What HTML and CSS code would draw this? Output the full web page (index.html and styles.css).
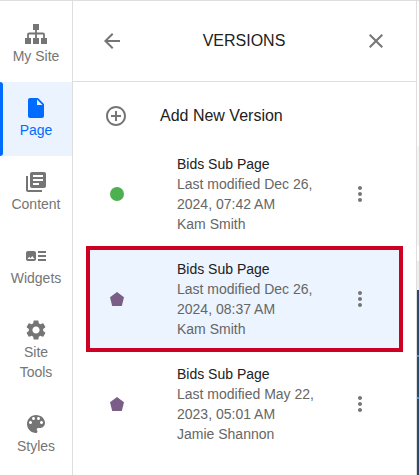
FILE: index.html
```html
<!DOCTYPE html>
<html lang="en">
<head>
<meta charset="utf-8">
<title>Versions</title>
<link rel="stylesheet" href="styles.css">
</head>
<body>
<div class="app">
  <nav class="sidebar" aria-label="Main">
    <a class="nav-item" href="#">
      <svg class="icon" viewBox="0 0 24 24"><rect x="9" y="2" width="6" height="6"/><rect x="1" y="16" width="6" height="6"/><rect x="9" y="16" width="6" height="6"/><rect x="17" y="16" width="6" height="6"/><path d="M12 8v8M4 16v-3.500q0-1 1-1h14q1 0 1 1V16" fill="none" stroke="#757575" stroke-width="1.800"/></svg>
      <span>My Site</span>
    </a>
    <a class="nav-item active" href="#" aria-current="page">
      <svg class="icon" viewBox="0 0 24 24"><path d="M6 2c-1.100 0-2 .9-2 2v16c0 1.100.9 2 2 2h12c1.100 0 2-.9 2-2V8l-6-6H6zm7 7V3.500L18.500 9H13z"/></svg>
      <span>Page</span>
    </a>
    <a class="nav-item" href="#">
      <svg class="icon" viewBox="0 0 24 24"><path d="M4 6H2v14c0 1.100.9 2 2 2h14v-2H4V6zm16-4H8c-1.100 0-2 .9-2 2v12c0 1.100.9 2 2 2h12c1.100 0 2-.9 2-2V4c0-1.100-.9-2-2-2zm-1 9H9V9h10v2zm-4 4H9v-2h6v2zm4-8H9V5h10v2z"/></svg>
      <span>Content</span>
    </a>
    <a class="nav-item" href="#">
      <svg class="icon" viewBox="0 0 24 24"><path d="M22 13h-8v-2h8v2zm0-6h-8v2h8V7zm-8 10h8v-2h-8v2zm-2-8v6c0 1.100-.9 2-2 2H4c-1.100 0-2-.9-2-2V9c0-1.100.9-2 2-2h6c1.100 0 2 .9 2 2zm-1.500 6l-2.250-3-1.750 2.260-1.250-1.510L3.500 15h7z"/></svg>
      <span>Widgets</span>
    </a>
    <a class="nav-item" href="#">
      <svg class="icon" viewBox="0 0 24 24"><path d="M19.140 12.940c.04-.3.060-.61.060-.94 0-.32-.02-.64-.07-.94l2.030-1.580c.18-.14.230-.41.120-.61l-1.920-3.320c-.12-.22-.37-.29-.59-.22l-2.390.96c-.5-.38-1.030-.7-1.620-.94l-.36-2.540c-.04-.24-.24-.41-.48-.41h-3.840c-.24 0-.43.170-.47.410l-.36 2.540c-.59.240-1.130.570-1.620.940l-2.390-.96c-.22-.08-.47 0-.59.220L2.740 8.870c-.12.210-.08.470.12.610l2.030 1.580c-.05.300-.09.630-.09.940s.02.640.070.940l-2.030 1.580c-.18.140-.23.410-.12.610l1.920 3.320c.12.220.37.290.59.220l2.390-.96c.5.380 1.030.7 1.620.940l.36 2.540c.05.240.24.410.48.410h3.840c.24 0 .44-.17.470-.41l.36-2.540c.59-.24 1.130-.56 1.620-.94l2.390.96c.22.080.47 0 .59-.22l1.920-3.320c.12-.22.070-.47-.12-.61l-2.010-1.580zM12 15.600c-1.980 0-3.600-1.620-3.600-3.600s1.620-3.600 3.600-3.600 3.600 1.620 3.600 3.600-1.620 3.600-3.600 3.600z"/></svg>
      <span>Site Tools</span>
    </a>
    <a class="nav-item" href="#">
      <svg class="icon" viewBox="0 0 24 24"><path d="M12 3c-4.970 0-9 4.030-9 9s4.030 9 9 9c.83 0 1.500-.67 1.500-1.500 0-.39-.15-.74-.39-1.010-.23-.26-.38-.61-.38-.99 0-.83.670-1.500 1.500-1.500H16c2.760 0 5-2.240 5-5 0-4.420-4.030-8-9-8zm-5.500 9c-.83 0-1.500-.67-1.500-1.500S5.670 9 6.500 9 8 9.670 8 10.500 7.330 12 6.500 12zm3-4C8.670 8 8 7.330 8 6.500S8.670 5 9.500 5s1.500.67 1.500 1.500S10.330 8 9.500 8zm5 0c-.83 0-1.500-.67-1.500-1.500S13.670 5 14.500 5s1.500.67 1.500 1.500S15.330 8 14.500 8zm3 4c-.83 0-1.500-.67-1.500-1.500S16.670 9 17.500 9s1.500.67 1.500 1.500-.67 1.500-1.500 1.500z"/></svg>
      <span>Styles</span>
    </a>
  </nav>

  <main class="panel">
    <header class="panel-header">
      <button class="icon-button" type="button" aria-label="Back">
        <svg class="icon" viewBox="0 0 24 24"><path d="M20 11H7.830l5.590-5.590L12 4l-8 8 8 8 1.410-1.410L7.830 13H20v-2z"/></svg>
      </button>
      <h1 class="title">VERSIONS</h1>
      <button class="icon-button" type="button" aria-label="Close">
        <svg class="icon" viewBox="0 0 24 24"><path d="M19 6.410L17.590 5 12 10.590 6.410 5 5 6.410 10.590 12 5 17.590 6.410 19 12 13.410 17.590 19 19 17.590 13.410 12z"/></svg>
      </button>
    </header>

    <button class="add-version" type="button">
      <svg class="icon" viewBox="0 0 24 24"><path d="M13 7h-2v4H7v2h4v4h2v-4h4v-2h-4V7zm-1-5C6.480 2 2 6.480 2 12s4.480 10 10 10 10-4.480 10-10S17.520 2 12 2zm0 18c-4.410 0-8-3.590-8-8s3.590-8 8-8 8 3.590 8 8-3.590 8-8 8z"/></svg>
      <span>Add New Version</span>
    </button>

    <ul class="versions">
      <li class="version">
        <svg class="status published" viewBox="0 0 14 14"><circle cx="7" cy="7" r="7"/></svg>
        <div class="details">
          <h2 class="name">Bids Sub Page</h2>
          <p>Last modified Dec 26, 2024, 07:42 AM</p>
          <p>Kam Smith</p>
        </div>
        <button class="icon-button" type="button" aria-label="More options">
          <svg class="icon" viewBox="0 0 24 24"><path d="M12 8c1.100 0 2-.9 2-2s-.9-2-2-2-2 .9-2 2 .9 2 2 2zm0 2c-1.100 0-2 .9-2 2s.9 2 2 2 2-.9 2-2-.9-2-2-2zm0 6c-1.100 0-2 .9-2 2s.9 2 2 2 2-.9 2-2-.9-2-2-2z"/></svg>
        </button>
      </li>
      <li class="version selected">
        <svg class="status draft" viewBox="0 0 14 14"><path d="M7 0l7 5.300L11.800 14H2.200L0 5.300z"/></svg>
        <div class="details">
          <h2 class="name">Bids Sub Page</h2>
          <p>Last modified Dec 26, 2024, 08:37 AM</p>
          <p>Kam Smith</p>
        </div>
        <button class="icon-button" type="button" aria-label="More options">
          <svg class="icon" viewBox="0 0 24 24"><path d="M12 8c1.100 0 2-.9 2-2s-.9-2-2-2-2 .9-2 2 .9 2 2 2zm0 2c-1.100 0-2 .9-2 2s.9 2 2 2 2-.9 2-2-.9-2-2-2zm0 6c-1.100 0-2 .9-2 2s.9 2 2 2 2-.9 2-2-.9-2-2-2z"/></svg>
        </button>
      </li>
      <li class="version">
        <svg class="status draft" viewBox="0 0 14 14"><path d="M7 0l7 5.300L11.800 14H2.200L0 5.300z"/></svg>
        <div class="details">
          <h2 class="name">Bids Sub Page</h2>
          <p>Last modified May 22, 2023, 05:01 AM</p>
          <p>Jamie Shannon</p>
        </div>
        <button class="icon-button" type="button" aria-label="More options">
          <svg class="icon" viewBox="0 0 24 24"><path d="M12 8c1.100 0 2-.9 2-2s-.9-2-2-2-2 .9-2 2 .9 2 2 2zm0 2c-1.100 0-2 .9-2 2s.9 2 2 2 2-.9 2-2-.9-2-2-2zm0 6c-1.100 0-2 .9-2 2s.9 2 2 2 2-.9 2-2-.9-2-2-2z"/></svg>
        </button>
      </li>
    </ul>
  </main>

  <div class="preview"></div>
</div>
</body>
</html>
```
FILE: styles.css
```css
* {
  box-sizing: border-box;
}

body {
  margin: 0;
  background: #fff;
  color: #212121;
  font: 14px/20px "Liberation Sans", Arial, sans-serif;
}

h1, h2, p, ul {
  margin: 0;
  padding: 0;
  font-size: inherit;
  font-weight: 400;
}

button {
  padding: 0;
  border: 0;
  background: none;
  color: inherit;
  font: inherit;
  cursor: pointer;
}

.icon {
  display: block;
  flex: none;
  width: 24px;
  height: 24px;
  fill: #757575;
}

.app {
  display: flex;
  min-height: 100vh;
  border-top: 1px solid #dedede;
}

.sidebar {
  flex: none;
  width: 73px;
  padding-top: 7px;
  border-right: 1px solid #dedede;
}

.nav-item {
  position: relative;
  display: flex;
  flex-direction: column;
  align-items: center;
  padding: 14px 8px 16px;
  color: #757575;
  text-align: center;
  text-decoration: none;
}

.nav-item.active {
  background: #ebf3ff;
  color: #006cff;
}

.nav-item.active::before {
  position: absolute;
  top: 0;
  bottom: 0;
  left: 0;
  width: 3px;
  border-radius: 0 3px 3px 0;
  background: #006cff;
  content: "";
}

.nav-item.active .icon {
  fill: #006cff;
}

.panel {
  flex: 1;
  min-width: 0;
}

.panel-header {
  display: flex;
  align-items: center;
  justify-content: space-between;
  height: 81px;
  padding: 0 24px 0 23px;
  border-bottom: 1px solid #dedede;
}

.icon-button {
  display: grid;
  flex: none;
  place-items: center;
  width: 32px;
  height: 32px;
}

.title {
  font-size: 16px;
}

.add-version {
  display: flex;
  gap: 32px;
  align-items: center;
  width: 100%;
  height: 59px;
  padding: 9px 31px 0;
  font-size: 16px;
}

.versions {
  padding: 0 13px;
  list-style: none;
}

.version {
  display: flex;
  gap: 8px;
  align-items: center;
  padding: 13px 27px 12px 24px;
}

.version.selected {
  margin-bottom: -1px;
  padding-bottom: 13px;
  background: #ebf4ff;
  box-shadow: inset 0 0 0 4px #cc0022;
}

.status {
  flex: none;
  width: 14px;
  height: 14px;
  margin-right: 45px;
}

.published {
  fill: #4caf50;
}

.draft {
  fill: #7b5e87;
}

.details {
  flex: 1;
  min-width: 0;
  color: #666;
}

.name {
  color: #212121;
}

.preview {
  flex: none;
  width: 3px;
  border-left: 1px solid #dedede;
  background: linear-gradient(#fff 145px, #f5f5f5 145px 245px, #fff 245px 260px, #eee 260px 289px, #2d4a6d 289px 354px, #4a90d9 354px 356px, #2d4a6d 356px 396px, #4a90d9 396px 398px, #2d4a6d 398px);
}
```
